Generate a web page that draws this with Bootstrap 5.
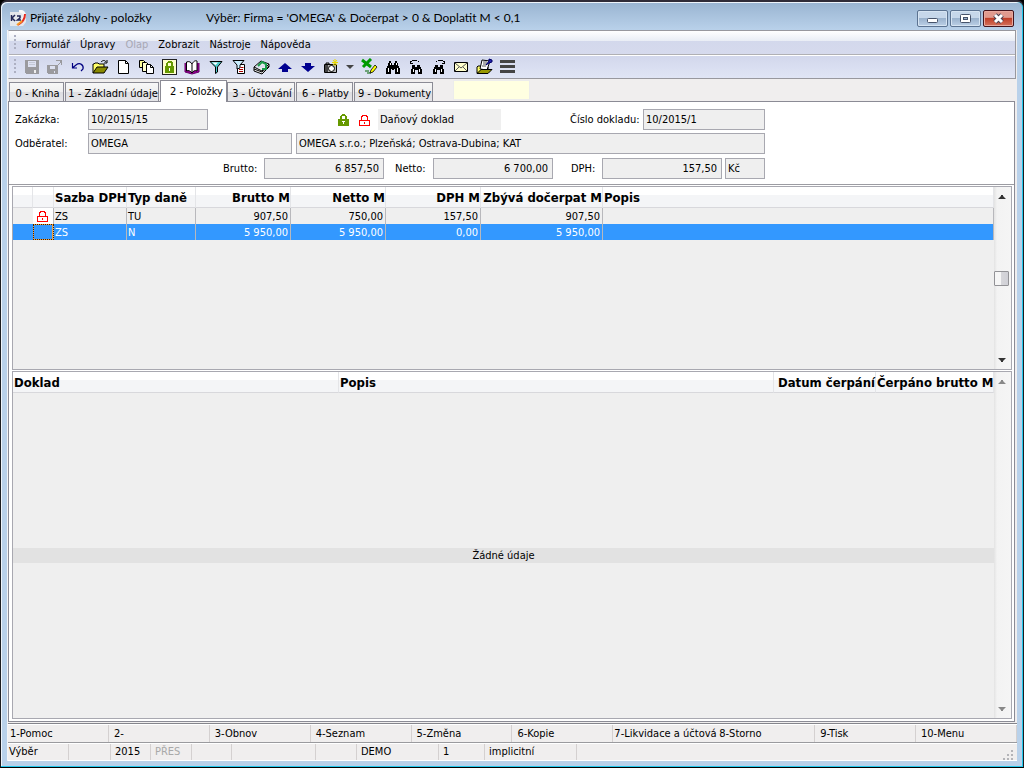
<!DOCTYPE html>
<html lang="cs">
<head>
<meta charset="utf-8">
<meta name="viewport" content="width=device-width, initial-scale=1">
<title>Přijaté zálohy - položky</title>
<link rel="stylesheet" href="https://cdn.jsdelivr.net/npm/bootstrap@5.3.0/dist/css/bootstrap.min.css">
<style>
:root{--ui:"DejaVu Sans Condensed","Noto Sans",sans-serif;--line:#a8a8b0;--edge:#8b8b95;--face:#efefef}
body{font:11px/14px var(--ui);color:#000;background:#000;height:100vh;min-height:600px;overflow:hidden}
button,input{font:inherit;color:inherit;border-radius:0}
.win{height:100%;padding:0 6px 6px 6px;border:1px solid #1c1c20;border-top:2px solid #302c38;border-bottom:1px solid #000;border-radius:7px 7px 0 0;
 background:linear-gradient(#99b4d1,#b9d1ea 28px,#b9d1ea);box-shadow:inset -1px 0 #22c8ec,inset 0 -1px #22c8ec,inset 1px 1px #eef4fb}
.title-row{height:28px;font:12px/16px Lato,"Noto Sans",sans-serif;padding:4px 3px 0 3px}
.title-row .caption{width:176px}
.wbtn{width:31px;height:17px;border:1px solid #5c7391;border-radius:2px;padding:0;background:linear-gradient(#c6d7ea 0 45%,#9ab2cd 50%,#bcd0e6);box-shadow:inset 0 0 0 1px #d6e4f2;display:flex;align-items:center;justify-content:center}
.wbtns{gap:2px}
.wbtn.shut{border-color:#43141c;background:linear-gradient(#e09a8e 0 42%,#c03f28 50%,#d4725c);box-shadow:inset 0 0 0 1px #e8a99e}
.client{background:#f0eeee;border-left:1px solid #f4f4f6;min-height:0}
.bars{border:1px solid #98989e;border-left-color:#e8ecf4;margin:0 1px 1px 0}
.menubar{height:24px;padding-left:12px;background:linear-gradient(#fff,#e9edf5 10px,#d3d8ec 10px,#d6daed);border-bottom:1px solid #b0b0b4}
.menubar button{border:0;background:none;padding:4px 5px 0;height:22px}
.menubar button:disabled{color:#a8a8b4}
.toolbar{height:23px;padding-left:11px;background:linear-gradient(#fff 1px,#d2d7ec 1px,#e0e5f5)}
.grip{position:relative}
.grip::before{content:"";position:absolute;left:5px;top:4px;bottom:3px;width:2px;background:repeating-linear-gradient(#adb0c2 0 2px,transparent 2px 4px)}
.tool{width:23px;height:22px;border:0;padding:0;background:none;display:flex;align-items:center;justify-content:center}
.tool.drop{width:16px}
.tool svg{display:block}
.tabstrip{height:21px;padding-left:1px}
.tabstrip button{height:19px;border:1px solid var(--edge);border-bottom:0;padding:3px 0 0 2px;text-align:center;background:linear-gradient(#f7f7f7,#efefef 9px,#dedee2 9px,#e5e5e8);margin-right:1px;white-space:nowrap}
.tabstrip button.active{height:22px;background:#fff;padding:0 0 0 6px;margin:0 0 -1px 0;z-index:1}
.t0{width:55px}.t1{width:94px}.t2{width:67px}.t3{width:68px}.t4{width:57px}.t5{width:79px}
.quick{width:77px;height:20px;border:1px solid #ececec;background:#ffffe1;margin:0 0 1px 19px}
.sheet{background:#fff;border:1px solid var(--edge);margin-right:2px;min-height:0}
.fields{padding:7px 6px 4px;height:82px}
.fields input{height:21px;border:1px solid var(--line);background:var(--face);padding:0 2px 1px;outline:0}
.line-a{margin-bottom:3px;height:21px}.line-b{margin-bottom:4px}
.lab{width:73px}.w120{width:120px}.w122{width:122px}.w204{width:204px}.w469{width:469px}.w40{width:40px;margin-left:3px}
.fields input.num{text-align:right;padding-right:4px}
.lock-pair{width:170px;padding:1px 0 0 130px;gap:10px}
.kind{width:123px;height:21px;background:var(--face);padding:4px 2px}
.lab-no{width:73px;margin-left:69px}
.lab-br{width:41px;margin-left:208px}.lab-ne{width:38px;margin-left:11px}.lab-dp{width:31px;margin-left:18px}
.frame{border:1px solid var(--line);background:var(--face);min-height:0}
.frame-wrap{border-top:1px solid #9c9ca2;padding:1px 2px 2px 3px;gap:1px;min-height:0}
.upper{flex:0 0 184px}
.grid-t{table-layout:fixed;width:100%;border-collapse:separate;border-spacing:0}
.grid-t th{font:bold 13px/18px var(--ui);padding:2px 1px 0;height:21px;background:linear-gradient(#fff 8px,#f4f5f7 8px);border-right:1px solid #e4e5e8;border-bottom:1px solid #d8d8dc;white-space:nowrap}
.grid-t td{height:16px;padding:1px 2px 0 1px;line-height:15px;border-right:1px solid #b8b8bc;white-space:nowrap}
.grid-t .r{text-align:right}
.grid-t th.r{padding-right:0}
.grid-t td:first-child{border-right-color:transparent}
.grid-t .sel td{background:#3398ff;color:#fff}
.grid-t .sel td:nth-child(2){outline:1px dotted #402000;outline-offset:-1px;box-shadow:inset 0 0 0 1px #f0a040}
.grid-t td svg{display:block;margin:0 auto}
.low th{height:20px}
.c20{width:20px}.c21{width:21px}.c73{width:73px}.c69{width:69px}.c95{width:95px}.c122{width:122px}.c326{width:326px}.c102{width:102px}.c118{width:118px}
.sbar{width:17px;background:linear-gradient(90deg,#e3e3e3,#f3f3f3 3px,#f5f5f5);position:relative;flex:none}
.sbar svg{position:absolute;left:4px}
.sbar .up{top:8px}.sbar .dn{bottom:7px}
.thumb{position:absolute;left:0;width:15px;height:15px;border:1px solid #929296;border-radius:1px;background:linear-gradient(90deg,#f6f6f6 45%,#d6d6da 50%,#d0d0d6)}
.nodata{background:#e2e2e2;height:15px;line-height:16px}
.keys{height:19px;border-bottom:1px solid #9a9a9e;border-top:1px solid #fff;margin-top:2px;box-shadow:0 -1px #85858c}
.keys button{border:0;border-right:1px solid #d4d0d0;background:none;padding:1px 0 0 2px;text-align:left;flex:none;width:10%;white-space:nowrap}
.keys button + button{padding-left:5px}
.keys button.long{padding-left:1px;border-right:0}
.status{height:18px;border:solid #fff;border-width:1px 0}
.status span{border-right:1px solid #d4d0d0;padding:1px 0 0 4px;height:16px;white-space:nowrap}
.s0{width:61px}.status .s0{padding-left:1px}.s1{width:42px}.s2{width:40px}.s3{width:41px;color:#a8a8a8}.s4{width:40px}.s5{width:84px}.s6{width:41px}.s7{width:82px}.s8{width:46px}.s9{width:92px}
</style>
</head>
<body>
<svg width="0" height="0" class="position-absolute" aria-hidden="true">
 <symbol id="arr" viewBox="0 0 8 4"><path d="M0 4h8L5 1V0H3v1z"/></symbol>
 <symbol id="lockr" viewBox="0 0 11 11"><path d="M0 5h11v6H0z" fill="red"/><path d="M1 6h9v4H1z" fill="#fff"/><path d="M5 7h1v2H5zM2 2h1v3H2zM8 2h1v3H8zM2 1h2v1H2zM7 1h2v1H7zM3 0h5v1H3z" fill="red"/></symbol>
 <symbol id="lockg" viewBox="0 0 11 12"><path d="M0 5h11v7H0zM2 2h2v3H2zM7 2h2v3H7zM3 1h5v1H3zM4 0h3v1H4z" fill="#690"/><path d="M5 7h1v3H5zM4 7h3v1H4z" fill="#fff"/></symbol>
 <symbol id="bino" viewBox="0 0 16 16"><path d="M4 2h2v2h1v2h2V4h1V2h2v2h1v3h1v2h1v6h-5v-5H9v1H7v-1H6v5H1V9h1V7h1V4h1z"/><path d="M3 9h1v4H3zM12 9h1v4h-1zM5 4h1v2H5zM11 4h1v2h-1z" fill="#fff"/></symbol>
 <symbol id="binos" viewBox="0 0 16 16"><path d="M4 6h3v2h2V6h3v2h1v2h1v5h-4v-4H7v4H3v-5h1z"/><path d="M5 10h1v3H5zM11 10h1v3h-1z" fill="#fff"/><path d="M2 4V2h2V1h5v1h2v1h-1V2H4v1H3v1h2v1H2z"/></symbol>
</svg>
<div class="win d-flex flex-column">
 <header class="title-row d-flex align-items-center">
  <svg width="16" height="16" class="me-1"><path d="M0 2h12l4 4v6l-3 4H0z" fill="#e4e7ec"/><path d="M9 1c5 0 7 4 4 8l-5 6" fill="none" stroke="#f8f8f8" stroke-width="3"/><path d="M15 4c0 5-2 8-7 11" fill="none" stroke="#e52c20" stroke-width="2"/><path d="M12 11l-5 4" stroke="#f49a28" stroke-width="2"/><path d="M1.500 5v6M5 5L2 8l3 3M7 6h3v2L7.500 10H11" fill="none" stroke="#222858" stroke-width="1.500"/></svg>
  <span class="caption text-nowrap">Přijaté zálohy - položky</span>
  <span class="flex-grow-1 text-nowrap">Výběr: Firma = 'OMEGA' &amp; Dočerpat &gt; 0 &amp; Doplatit M &lt; 0,1</span>
  <div class="wbtns d-flex">
   <button class="wbtn" type="button" aria-label="Minimalizovat"><svg width="11" height="9"><rect x=".5" y="4.500" width="10" height="4" rx="1" fill="#fff" stroke="#46536a"/></svg></button>
   <button class="wbtn" type="button" aria-label="Maximalizovat"><svg width="11" height="9"><rect x=".5" y=".5" width="10" height="8" rx="1" fill="#fff" stroke="#46536a"/><rect x="3.500" y="3.500" width="4" height="2" fill="#9ab2cd" stroke="#46536a"/></svg></button>
   <button class="wbtn shut" type="button" aria-label="Zavřít"><svg width="13" height="11"><path d="M3 2l7 7M10 2L3 9" stroke="#474050" stroke-width="5"/><path d="M3 2l7 7M10 2L3 9" stroke="#fff" stroke-width="3"/></svg></button>
  </div>
 </header>
 <div class="client flex-grow-1 d-flex flex-column">
  <div class="bars">
   <nav class="menubar grip d-flex align-items-center">
    <button type="button">Formulář</button><button type="button">Úpravy</button><button type="button" disabled>Olap</button><button type="button">Zobrazit</button><button type="button">Nástroje</button><button type="button">Nápověda</button>
   </nav>
   <div class="toolbar grip d-flex align-items-center" role="toolbar" aria-label="Nástroje">
    <button class="tool" type="button" aria-label="Uložit"><svg width="16" height="16" shape-rendering="crispEdges"><path d="M1 1h14v14H2l-1-1z" fill="#9a9a9e"/><path d="M4 2h8v6H4z" fill="#dde1f1"/><path d="M5 3h6v1H5zM5 5h6v1H5z" fill="#c4c8d6"/><path d="M10 11h2v3h-2z" fill="#eee"/></svg></button>
    <button class="tool" type="button" aria-label="Uložit jako"><svg width="16" height="16" shape-rendering="crispEdges"><path d="M0 6h11v9H1l-1-1z" fill="#9a9a9e"/><path d="M3 7h5v3H3zM7 12h1v2H7z" fill="#dde1f1"/><path d="M9 1h6v5h-1V4h-1v1h-1v1h-1v1h-1V6h1V5h1V4h1V2H9z" fill="#9a9a9e"/></svg></button>
    <button class="tool" type="button" aria-label="Zpět"><svg width="16" height="16"><path d="M2.500 4v5H7M3 8.500L6 6c4-3 8 0 7 4l-2 2" fill="none" stroke="#000080" stroke-width="1.200"/></svg></button>
    <button class="tool" type="button" aria-label="Otevřít"><svg width="17" height="16"><path d="M1 14V5h1l1-1h3l1 1h5v3" fill="#ff6" stroke="#000"/><path d="M1 14l4-6h11l-4 6z" fill="#8a8a00" stroke="#000"/><path d="M9 3c2-2 4-2 5 0M15 1v3h-3" fill="none" stroke="#000"/></svg></button>
    <button class="tool" type="button" aria-label="Nový"><svg width="16" height="16"><path d="M2.500 1.500h7l3 3v10h-10z" fill="#fff" stroke="#000"/><path d="M9.500 1.500v3h3" fill="none" stroke="#000"/></svg></button>
    <button class="tool" type="button" aria-label="Kopie"><svg width="16" height="16"><path d="M.5 1.500h4l2 2v5h-6z" fill="#ff9" stroke="#000"/><path d="M3.500 3.500h4l2 2v7h-6z" fill="#ffc" stroke="#000"/><path d="M7.500 5.500h4l3 3v6h-7z" fill="#fff" stroke="#000"/><path d="M11.500 5.500v3h3" fill="none" stroke="#000"/></svg></button>
    <button class="tool" type="button" aria-label="Potvrdit"><svg width="15" height="16" shape-rendering="crispEdges"><path d="M0 0h15v16H0z" fill="#222"/><path d="M1 1h13v14H1z" fill="#ffc"/><path d="M3 7h9v7H3zM4 7V4l2-2h3l2 2v3H9V4H6v3z" fill="#690"/><path d="M7 9h1v3H7z" fill="#fff"/></svg></button>
    <button class="tool" type="button" aria-label="Kniha"><svg width="17" height="16"><path d="M1 4v9l7 2 7-2V4" fill="#909" stroke="#606"/><path d="M2.500 3v9c2-1 4 0 5.500 2 1-2 3-3 5-2V2c-2-1-4 1-5 3-1-2-3-3-5.500-2z" fill="#fff" stroke="#000"/><path d="M8 5v9" stroke="#000"/></svg></button>
    <button class="tool" type="button" aria-label="Filtr"><svg width="16" height="16"><path d="M2 2.500h12L9.500 8v5l-2 1.500V8z" fill="#4ac8c8" stroke="#000"/><path d="M4 3.500h6L7.500 6z" fill="#fff"/></svg></button>
    <button class="tool" type="button" aria-label="Filtr podle"><svg width="16" height="16"><path d="M6.500 5.500h7v9h-7z" fill="#fff" stroke="#000"/><path d="M2 1.500h11L9 6v3l-3 1V6z" fill="#cef" stroke="#000"/><path d="M9.500 8.500h3M8 10.500h4M8 12.500h4" stroke="#a00"/></svg></button>
    <button class="tool" type="button" aria-label="Obnovit"><svg width="17" height="16"><path d="M1 8l7-6 8 3-7 7zM1 8v4l8 3 7-7V5M1 10l8 3 7-6" fill="#eee" stroke="#000"/><path d="M5 7l4-4 4 2v3M9 10h4V7" fill="none" stroke="#1a9a4a" stroke-width="2"/></svg></button>
    <button class="tool" type="button" aria-label="Předchozí"><svg width="14" height="16" fill="#000090"><path d="M7 4l7 6h-4v3H4v-3H0z"/></svg></button>
    <button class="tool" type="button" aria-label="Další"><svg width="14" height="16" fill="#000090"><path d="M7 13l7-6h-4V4H4v3H0z"/></svg></button>
    <button class="tool" type="button" aria-label="Snímek"><svg width="16" height="16"><path d="M1.500 5.500h12v8h-12zM3 5V4h3v1" fill="#bbb" stroke="#000"/><path d="M2 6h3v7H2z" fill="#444"/><circle cx="8.500" cy="9.500" r="3" fill="#fff" stroke="#000"/><path d="M12 0v7M9 3.500h6M10 1l4 5M14 1l-4 5" stroke="#e8d800"/></svg></button>
    <button class="tool drop" type="button" aria-label="Další snímky"><svg width="8" height="4" fill="#444"><path d="M0 0h8L4 4z"/></svg></button>
    <button class="tool" type="button" aria-label="Excel"><svg width="17" height="17"><path d="M1 2l9 7M10 1L2 9" stroke="#090" stroke-width="3"/><path d="M4 13h4M6 15h4" stroke="#060"/><path d="M9 15l1-3 4-5 2 2-4 5z" fill="#ff0" stroke="#000" stroke-width=".8"/></svg></button>
    <button class="tool" type="button" aria-label="Hledat"><svg width="16" height="16" shape-rendering="crispEdges"><use href="#bino"/></svg></button>
    <button class="tool" type="button" aria-label="Hledat předchozí"><svg width="16" height="16" shape-rendering="crispEdges"><use href="#binos"/></svg></button>
    <button class="tool" type="button" aria-label="Hledat další"><svg width="16" height="16" shape-rendering="crispEdges"><use href="#binos" transform="matrix(-1 0 0 1 16 0)"/></svg></button>
    <button class="tool" type="button" aria-label="Pošta"><svg width="15" height="16"><path d="M.5 3.500h13v9H.5z" fill="#ffc" stroke="#000"/><path d="M1 4l6 5 6-5M1 12l4-4M13 12L9 8" fill="none" stroke="#555"/></svg></button>
    <button class="tool" type="button" aria-label="Dokumenty"><svg width="17" height="17"><path d="M1 15V9l1-1h4l1 1h5v6z" fill="#ff6" stroke="#000"/><path d="M4 11l2-9 8 1-3 9z" fill="#fff" stroke="#000"/><path d="M7 4h4M7 6h4M6 8h4" stroke="#555"/><path d="M1 15.500l4-4h11l-4 4z" fill="#990" stroke="#000"/><path d="M10 7l3-4V1l3 1v2l-3 1z" fill="#22a" stroke="#006"/></svg></button>
    <button class="tool" type="button" aria-label="Nabídka"><svg width="15" height="16" shape-rendering="crispEdges" fill="#444"><path d="M0 1h15v3H0zM0 6h15v3H0zM0 11h15v3H0z"/></svg></button>
   </div>
  </div>
  <div class="tabstrip d-flex align-items-end" role="tablist">
   <button role="tab" type="button" class="t0">0 - Kniha</button><button role="tab" type="button" class="t1">1 - Základní údaje</button><button role="tab" type="button" aria-selected="true" class="t2 active position-relative">2 - Položky</button><button role="tab" type="button" class="t3">3 - Účtování</button><button role="tab" type="button" class="t4">6 - Platby</button><button role="tab" type="button" class="t5">9 - Dokumenty</button>
   <input class="quick" type="text" aria-label="Rychlé hledání">
  </div>
  <main class="sheet flex-grow-1 d-flex flex-column">
   <form class="fields">
    <div class="line-a d-flex align-items-center">
     <label class="lab" for="zak">Zakázka:</label><input id="zak" class="w120" readonly value="10/2015/15">
     <div class="lock-pair d-flex align-items-center"><svg width="11" height="12" class="flex-shrink-0" shape-rendering="crispEdges"><use href="#lockg"/></svg><svg width="11" height="11" class="flex-shrink-0" shape-rendering="crispEdges"><use href="#lockr"/></svg></div>
     <div class="kind">Daňový doklad</div>
     <label class="lab-no" for="cis">Číslo dokladu:</label><input id="cis" class="w122" readonly value="10/2015/1">
    </div>
    <div class="line-b d-flex align-items-center">
     <label class="lab" for="odb">Odběratel:</label><input id="odb" class="w204" readonly value="OMEGA"><input class="w469 ms-1" aria-label="Adresa" readonly value="OMEGA s.r.o.; Plzeňská; Ostrava-Dubina; KAT">
    </div>
    <div class="d-flex align-items-center">
     <label class="lab-br" for="bru">Brutto:</label><input id="bru" class="w120 num" readonly value="6 857,50">
     <label class="lab-ne" for="net">Netto:</label><input id="net" class="w120 num" readonly value="6 700,00">
     <label class="lab-dp" for="dph">DPH:</label><input id="dph" class="w120 num" readonly value="157,50"><input class="w40" aria-label="Měna" readonly value="Kč">
    </div>
   </form>
   <div class="frame-wrap flex-grow-1 d-flex flex-column">
    <section class="frame upper d-flex">
     <div class="flex-grow-1">
      <table class="grid-t">
       <colgroup><col class="c20"><col class="c21"><col class="c73"><col class="c69"><col class="c95"><col class="c95"><col class="c95"><col class="c122"><col></colgroup>
       <thead><tr><th></th><th></th><th>Sazba DPH</th><th>Typ daně</th><th class="r">Brutto M</th><th class="r">Netto M</th><th class="r">DPH M</th><th class="r">Zbývá dočerpat M</th><th>Popis</th></tr></thead>
       <tbody>
        <tr><td></td><td class="bg-white"><svg width="11" height="11" shape-rendering="crispEdges"><use href="#lockr"/></svg></td><td>ZS</td><td>TU</td><td class="r">907,50</td><td class="r">750,00</td><td class="r">157,50</td><td class="r">907,50</td><td></td></tr>
        <tr class="sel"><td></td><td></td><td>ZS</td><td>N</td><td class="r">5 950,00</td><td class="r">5 950,00</td><td class="r">0,00</td><td class="r">5 950,00</td><td></td></tr>
       </tbody>
      </table>
     </div>
     <div class="sbar"><svg class="up" width="8" height="4" fill="#333"><use href="#arr"/></svg><div class="thumb" style="top:46%"></div><svg class="dn" width="8" height="4" fill="#333"><use href="#arr" transform="matrix(1 0 0 -1 0 4)"/></svg></div>
    </section>
    <section class="frame flex-grow-1 d-flex">
     <div class="flex-grow-1 d-flex flex-column">
      <table class="grid-t low">
       <colgroup><col class="c326"><col><col class="c102"><col class="c118"></colgroup>
       <thead><tr><th>Doklad</th><th>Popis</th><th class="r">Datum čerpání</th><th class="r">Čerpáno brutto M</th></tr></thead>
      </table>
      <div class="flex-grow-1 d-flex flex-column justify-content-center"><div class="nodata text-center">Žádné údaje</div></div>
     </div>
     <div class="sbar"><svg class="up" width="8" height="4" fill="#888"><use href="#arr"/></svg><svg class="dn" width="8" height="4" fill="#888"><use href="#arr" transform="matrix(1 0 0 -1 0 4)"/></svg></div>
    </section>
   </div>
  </main>
  <div class="keys d-flex">
   <button type="button">1-Pomoc</button><button type="button">2-</button><button type="button">3-Obnov</button><button type="button">4-Seznam</button><button type="button">5-Změna</button><button type="button">6-Kopie</button><button type="button" class="long">7-Likvidace a účtová</button><button type="button">8-Storno</button><button type="button">9-Tisk</button><button type="button">10-Menu</button>
  </div>
  <footer class="status d-flex">
   <span class="s0">Výběr</span><span class="s1"></span><span class="s2">2015</span><span class="s3">PŘES</span><span class="s4"></span><span class="s5"></span><span class="s6"></span><span class="s7">DEMO</span><span class="s8">1</span><span class="s9">implicitní</span>
   <svg class="ms-auto mt-auto me-1" width="10" height="10" fill="#b4b4b8"><path d="M8 0h2v2H8zM8 4h2v2H8zM4 4h2v2H4zM8 8h2v2H8zM4 8h2v2H4zM0 8h2v2H0z"/></svg>
  </footer>
 </div>
</div>
<script src="https://cdn.jsdelivr.net/npm/bootstrap@5.3.0/dist/js/bootstrap.bundle.min.js"></script>
</body>
</html>
